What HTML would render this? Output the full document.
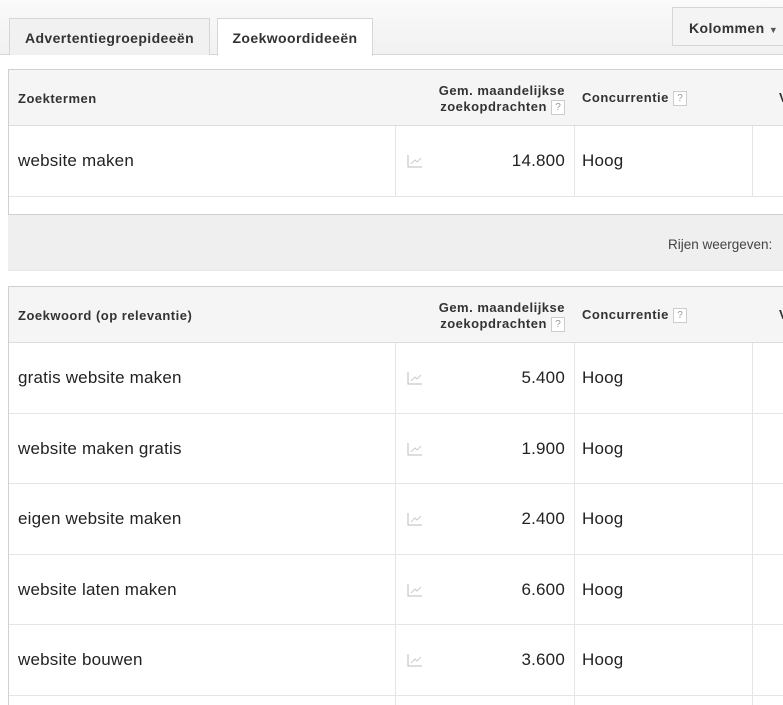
<!DOCTYPE html>
<html><head><meta charset="utf-8"><style>
html,body{margin:0;width:783px;height:705px;overflow:hidden}
body{background:#fff;font-family:"Liberation Sans",Arial,sans-serif;color:#222;position:relative}
.a{position:absolute}
.tab{position:absolute;top:18px;height:36px;border:1px solid #d6d6d6;border-bottom:none;font-weight:bold;font-size:14px;letter-spacing:0.4px;line-height:38px;text-align:center;color:#333}
.tbl{position:absolute;left:8px;width:775px;border:1px solid #d0d0d0;border-right:none;background:#fff;overflow:hidden;box-sizing:border-box}
.hd{position:relative;height:55px;background:#f5f5f5;border-bottom:1px solid #dcdcdc;font-weight:bold;font-size:13px;letter-spacing:0.5px;color:#333}
.row{position:relative;height:70.5px;box-sizing:border-box;border-bottom:1px solid #e5e5e5;font-size:17px;letter-spacing:0.2px;color:#222}
.q{display:inline-block;width:12px;height:13px;border:1px solid #ccc;font-size:10px;line-height:13px;text-align:center;color:#999;font-weight:normal;background:#fff;vertical-align:middle;letter-spacing:0}
.vl{position:absolute;top:0;bottom:0;width:1px;background:#e5e5e5}
.ic{position:absolute;left:398px;top:28px}
.t{position:absolute;left:9px;top:25px}
.n{position:absolute;left:300px;width:256px;text-align:right;top:25px}
.h{position:absolute;left:573px;top:25px}
.gh{position:absolute;left:300px;width:256px;top:13px;text-align:right;line-height:16px}
</style></head><body>
<div class="a" style="left:0;top:0;width:783px;height:54px;background:linear-gradient(#fafafa,#f1f1f1)"></div>
<div class="a" style="left:0;top:54px;width:783px;height:1px;background:#d6d6d6"></div>
<div class="tab" style="left:9px;width:199px;background:#f1f1f1">Advertentiegroepideeën</div>
<div class="tab" style="left:217px;width:154px;height:37px;background:#fff">Zoekwoordideeën</div>
<div class="a" style="left:672px;top:7px;width:111px;height:39px;border:1px solid #d6d6d6;border-right:none;background:#f4f4f4;font-weight:bold;font-size:14px;letter-spacing:0.4px;line-height:40px;color:#333;padding-left:16px;box-sizing:border-box;white-space:nowrap;overflow:hidden">Kolommen <span style="font-size:9px;color:#555">▼</span></div>

<div class="tbl" style="top:69px;height:146px">
 <div class="hd"><span class="a" style="left:9px;top:21px">Zoektermen</span>
  <div class="gh">Gem. maandelijkse<br>zoekopdrachten <span class="q">?</span></div>
  <span class="a" style="left:573px;top:20px">Concurrentie <span class="q">?</span></span><span class="a" style="left:770px;top:20px">V</span></div>
 <div class="row"><div class="vl" style="left:386px"></div><div class="vl" style="left:565px"></div><div class="vl" style="left:743px"></div>
  <span class="t">website maken</span>
  <svg class="ic" width="16" height="14"><path d="M1 1V13H15" stroke="#bbb" fill="none"/><path d="M4 10L8 6L10 8L14 4" stroke="#ccc" fill="none"/></svg>
  <span class="n">14.800</span><span class="h">Hoog</span></div>
</div>
<div class="a" style="left:8px;top:215px;width:775px;height:55px;background:#efefef;border-bottom:1px solid #e6e6e6"></div>
<div class="a" style="left:668px;top:237px;font-size:13.5px;color:#444;white-space:nowrap">Rijen weergeven:</div>

<div class="tbl" style="top:286px;height:419px;border-bottom:none">
 <div class="hd"><span class="a" style="left:9px;top:21px">Zoekwoord (op relevantie)</span>
  <div class="gh">Gem. maandelijkse<br>zoekopdrachten <span class="q">?</span></div>
  <span class="a" style="left:573px;top:20px">Concurrentie <span class="q">?</span></span><span class="a" style="left:770px;top:20px">V</span></div>
 <div class="row"><div class="vl" style="left:386px"></div><div class="vl" style="left:565px"></div><div class="vl" style="left:743px"></div><span class="t">gratis website maken</span><svg class="ic" width="16" height="14"><path d="M1 1V13H15" stroke="#bbb" fill="none"/><path d="M4 10L8 6L10 8L14 4" stroke="#ccc" fill="none"/></svg><span class="n">5.400</span><span class="h">Hoog</span></div>
 <div class="row"><div class="vl" style="left:386px"></div><div class="vl" style="left:565px"></div><div class="vl" style="left:743px"></div><span class="t">website maken gratis</span><svg class="ic" width="16" height="14"><path d="M1 1V13H15" stroke="#bbb" fill="none"/><path d="M4 10L8 6L10 8L14 4" stroke="#ccc" fill="none"/></svg><span class="n">1.900</span><span class="h">Hoog</span></div>
 <div class="row"><div class="vl" style="left:386px"></div><div class="vl" style="left:565px"></div><div class="vl" style="left:743px"></div><span class="t">eigen website maken</span><svg class="ic" width="16" height="14"><path d="M1 1V13H15" stroke="#bbb" fill="none"/><path d="M4 10L8 6L10 8L14 4" stroke="#ccc" fill="none"/></svg><span class="n">2.400</span><span class="h">Hoog</span></div>
 <div class="row"><div class="vl" style="left:386px"></div><div class="vl" style="left:565px"></div><div class="vl" style="left:743px"></div><span class="t">website laten maken</span><svg class="ic" width="16" height="14"><path d="M1 1V13H15" stroke="#bbb" fill="none"/><path d="M4 10L8 6L10 8L14 4" stroke="#ccc" fill="none"/></svg><span class="n">6.600</span><span class="h">Hoog</span></div>
 <div class="row"><div class="vl" style="left:386px"></div><div class="vl" style="left:565px"></div><div class="vl" style="left:743px"></div><span class="t">website bouwen</span><svg class="ic" width="16" height="14"><path d="M1 1V13H15" stroke="#bbb" fill="none"/><path d="M4 10L8 6L10 8L14 4" stroke="#ccc" fill="none"/></svg><span class="n">3.600</span><span class="h">Hoog</span></div>
 <div class="row" style="height:10px;border-bottom:none"><div class="vl" style="left:386px"></div><div class="vl" style="left:565px"></div><div class="vl" style="left:743px"></div></div>
</div>
</body></html>
